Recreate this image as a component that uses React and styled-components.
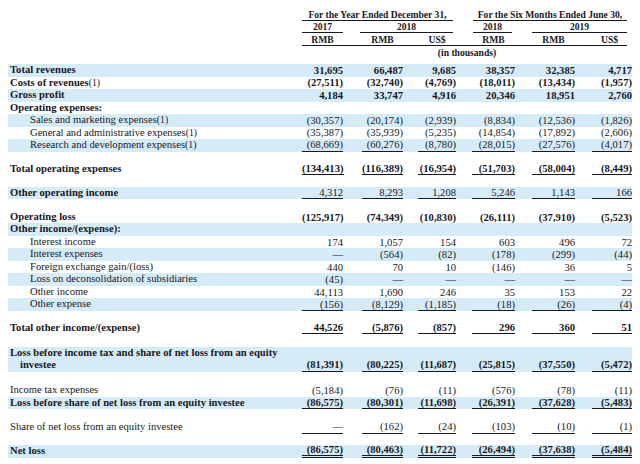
import React from "react";
import styled, { createGlobalStyle } from "styled-components";

const COLS = "1fr 41px 60px 53px 59px 60px 57px";
const GAPS = [0, 19, 15, 16, 17, 17];
const BAND = "#d6ebf8";
const INK = "#18181f";
const ROW = 12.5;

const Global = createGlobalStyle`
  html, body { margin: 0; padding: 0; background: #fff; }
  body { font-family: "Liberation Serif", "Times New Roman", serif; color: ${INK}; }
`;

const Page = styled.div`
  width: 640px;
  height: 464px;
  box-sizing: border-box;
  padding: 8px 8px 0 8px;
  overflow: hidden;
`;

const HeadGrid = styled.div`
  display: grid;
  grid-template-columns: ${COLS};
  grid-template-rows: 13px 12px 13px 12px;
  font-size: 9.6px;
  font-weight: bold;
  margin-bottom: 6px;
`;

const HeadCell = styled.div`
  grid-row: ${(p) => p.$row};
  grid-column: ${(p) => p.$cols};
  padding-left: ${(p) => p.$gap || 0}px;
  margin-right: ${(p) => p.$trim || 0}px;
  display: flex;
  align-items: stretch;
`;

const HeadText = styled.div`
  flex: 1;
  box-sizing: border-box;
  text-align: center;
  display: flex;
  align-items: center;
  justify-content: center;
  white-space: nowrap;
  border-bottom: ${(p) => (p.$line ? `1px solid ${INK}` : "none")};
`;

const UnitCell = styled(HeadCell)`
  border-bottom: 1px solid ${INK};
`;

const Row = styled.div`
  display: grid;
  grid-template-columns: ${COLS};
  height: ${(p) => p.$h || ROW}px;
  background: ${(p) => (p.$band ? BAND : "transparent")};
  font-size: 10.6px;
`;

const Spacer = styled.div`
  height: ${(p) => p.$h}px;
`;

const Label = styled.div`
  padding-left: ${(p) => p.$indent}px;
  text-indent: ${(p) => (p.$hang ? -10 : 0)}px;
  font-weight: ${(p) => (p.$bold ? "bold" : "normal")};
  line-height: ${ROW - 0.3}px;
  white-space: nowrap;
  align-self: center;
`;

const Note = styled.span`
  font-weight: normal;
  font-size: 9.8px;
`;

const DataCell = styled.div`
  padding-left: ${(p) => GAPS[p.$col]}px;
  display: flex;
  align-items: flex-end;
`;

const Num = styled.div`
  flex: 1;
  height: ${ROW}px;
  box-sizing: border-box;
  display: flex;
  align-items: center;
  justify-content: flex-end;
  white-space: nowrap;
  font-weight: ${(p) => (p.$bold ? "bold" : "normal")};
  border-bottom: ${(p) =>
    p.$line === "double" ? `3px double ${INK}` : p.$line ? `1px solid ${INK}` : "none"};
`;

const S = (h) => ({ spacer: h });

const DATA = [
  { label: "Total revenues", bold: true, band: true, nb: true, v: ["31,695", "66,487", "9,685", "38,357", "32,385", "4,717"] },
  { label: "Costs of revenues", note: true, bold: true, nb: true, v: ["(27,511)", "(32,740)", "(4,769)", "(18,011)", "(13,434)", "(1,957)"] },
  { label: "Gross profit", bold: true, band: true, nb: true, v: ["4,184", "33,747", "4,916", "20,346", "18,951", "2,760"] },
  { label: "Operating expenses:", bold: true },
  { label: "Sales and marketing expenses", note: true, indent: true, band: true, v: ["(30,357)", "(20,174)", "(2,939)", "(8,834)", "(12,536)", "(1,826)"] },
  { label: "General and administrative expenses", note: true, indent: true, v: ["(35,387)", "(35,939)", "(5,235)", "(14,854)", "(17,892)", "(2,606)"] },
  { label: "Research and development expenses", note: true, indent: true, band: true, line: true, v: ["(68,669)", "(60,276)", "(8,780)", "(28,015)", "(27,576)", "(4,017)"] },
  S(11.25),
  { label: "Total operating expenses", bold: true, nb: true, line: true, v: ["(134,413)", "(116,389)", "(16,954)", "(51,703)", "(58,004)", "(8,449)"] },
  S(11.5),
  { label: "Other operating income", bold: true, band: true, line: true, v: ["4,312", "8,293", "1,208", "5,246", "1,143", "166"] },
  S(11.5),
  { label: "Operating loss", bold: true, nb: true, v: ["(125,917)", "(74,349)", "(10,830)", "(26,111)", "(37,910)", "(5,523)"] },
  { label: "Other income/(expense):", bold: true, band: true },
  { label: "Interest income", indent: true, v: ["174", "1,057", "154", "603", "496", "72"] },
  { label: "Interest expenses", indent: true, band: true, v: ["—", "(564)", "(82)", "(178)", "(299)", "(44)"] },
  { label: "Foreign exchange gain/(loss)", indent: true, v: ["440", "70", "10", "(146)", "36", "5"] },
  { label: "Loss on deconsolidation of subsidiaries", indent: true, band: true, v: ["(45)", "—", "—", "—", "—", "—"] },
  { label: "Other income", indent: true, v: ["44,113", "1,690", "246", "35", "153", "22"] },
  { label: "Other expense", indent: true, band: true, line: true, v: ["(156)", "(8,129)", "(1,185)", "(18)", "(26)", "(4)"] },
  S(11),
  { label: "Total other income/(expense)", bold: true, nb: true, line: true, v: ["44,526", "(5,876)", "(857)", "296", "360", "51"] },
  S(12.75),
  { label: "Loss before income tax and share of net loss from an equity", label2: "investee", bold: true, nb: true, band: true, line: true, h: 24.5, v: ["(81,391)", "(80,225)", "(11,687)", "(25,815)", "(37,550)", "(5,472)"] },
  S(12.5),
  { label: "Income tax expenses", v: ["(5,184)", "(76)", "(11)", "(576)", "(78)", "(11)"] },
  { label: "Loss before share of net loss from an equity investee", bold: true, nb: true, band: true, line: true, h: 12, v: ["(86,575)", "(80,301)", "(11,698)", "(26,391)", "(37,628)", "(5,483)"] },
  S(12.5),
  { label: "Share of net loss from an equity investee", line: true, v: ["—", "(162)", "(24)", "(103)", "(10)", "(1)"] },
  S(11.5),
  { label: "Net loss", bold: true, nb: true, band: true, line: "double", v: ["(86,575)", "(80,463)", "(11,722)", "(26,494)", "(37,638)", "(5,484)"] },
];

function Header() {
  return (
    <HeadGrid>
      <HeadCell $row={1} $cols="2 / 5" $trim={3}>
        <HeadText $line>For the Year Ended December 31,</HeadText>
      </HeadCell>
      <HeadCell $row={1} $cols="5 / 8" $gap={17} $trim={5}>
        <HeadText $line>For the Six Months Ended June 30,</HeadText>
      </HeadCell>

      <HeadCell $row={2} $cols="2 / 3">
        <HeadText $line>2017</HeadText>
      </HeadCell>
      <HeadCell $row={2} $cols="3 / 5" $gap={17} $trim={3}>
        <HeadText $line>2018</HeadText>
      </HeadCell>
      <HeadCell $row={2} $cols="5 / 6" $gap={17} $trim={3}>
        <HeadText $line>2018</HeadText>
      </HeadCell>
      <HeadCell $row={2} $cols="6 / 8" $gap={17} $trim={5}>
        <HeadText $line>2019</HeadText>
      </HeadCell>

      {["RMB", "RMB", "US$", "RMB", "RMB", "US$"].map((t, i) => (
        <UnitCell key={i} $row={3} $cols={`${i + 2} / ${i + 3}`} $gap={GAPS[i]} $trim={i === 5 ? 5 : 0}>
          <HeadText>{t}</HeadText>
        </UnitCell>
      ))}

      <HeadCell $row={4} $cols="2 / 8">
        <HeadText>(in thousands)</HeadText>
      </HeadCell>
    </HeadGrid>
  );
}

function DataRow({ r }) {
  const indent = r.indent ? 22 : 2;
  return (
    <Row $band={r.band} $h={r.h}>
      <Label $indent={r.label2 ? 12 : indent} $hang={!!r.label2} $bold={r.bold}>
        {r.label}
        {r.note && <Note>(1)</Note>}
        {r.label2 && (
          <>
            <br />
            {r.label2}
          </>
        )}
      </Label>
      {r.v &&
        r.v.map((x, i) => (
          <DataCell key={i} $col={i}>
            <Num $bold={r.nb} $line={r.line}>{x}</Num>
          </DataCell>
        ))}
    </Row>
  );
}

export default function App() {
  return (
    <>
      <Global />
      <Page>
        <Header />
        {DATA.map((r, i) => (r.spacer ? <Spacer key={i} $h={r.spacer} /> : <DataRow key={i} r={r} />))}
      </Page>
    </>
  );
}
